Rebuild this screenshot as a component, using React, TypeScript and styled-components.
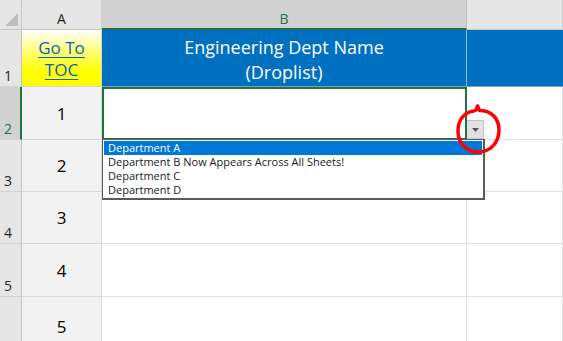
import styled, { createGlobalStyle, css } from "styled-components";

const GlobalStyle = createGlobalStyle`
  html, body {
    margin: 0;
    padding: 0;
    background: #ffffff;
    overflow: hidden;
  }
`;

const green = "#217346";
const grid = "#e1e1e1";
const headBorder = "#c6c6c6";

const departments = [
  "Department A",
  "Department B Now Appears Across All Sheets!",
  "Department C",
  "Department D",
];

const rows = [
  { num: 2, value: "1" },
  { num: 3, value: "2" },
  { num: 4, value: "3" },
  { num: 5, value: "4" },
  { num: 6, value: "5" },
];

export default function App() {
  return (
    <>
      <GlobalStyle />
      <Sheet>
        <Corner>
          <CornerMark />
        </Corner>
        <ColHeader>A</ColHeader>
        <ColHeader selected>B</ColHeader>
        <ColHeader />

        <RowHeader>1</RowHeader>
        <LinkCell>
          <Link>Go To</Link>
          <Link>TOC</Link>
        </LinkCell>
        <TitleCell first>
          Engineering Dept Name
          <br />
          (Droplist)
        </TitleCell>
        <TitleCell />

        {rows.map((r) => (
          <Row key={r.num}>
            <RowHeader selected={r.num === 2}>{r.num}</RowHeader>
            <IndexCell>{r.value}</IndexCell>
            {r.num === 2 ? <ActiveCell /> : <Cell />}
            <Cell />
          </Row>
        ))}

        <DropButton>
          <svg width="7" height="4" viewBox="0 0 7 4">
            <path d="M0 0 L7 0 L3.5 4 Z" fill="#555" />
          </svg>
        </DropButton>

        <DropList>
          {departments.map((d, i) => (
            <DropItem key={d} active={i === 0}>
              {d}
            </DropItem>
          ))}
        </DropList>

        <Annotation width="54" height="56" viewBox="0 0 54 56">
          <path
            d="M23 8 L24.5 4 L26.5 8.5 C37 8.5 46 15 46 28 C46 41 37 50 25 50 C13 50 5 41 5 29 C5 18 11 10 21 9"
            fill="none"
            stroke="#ff0000"
            strokeWidth="3.5"
            strokeLinecap="round"
            strokeLinejoin="round"
          />
        </Annotation>
      </Sheet>
    </>
  );
}

const Sheet = styled.div`
  position: relative;
  display: grid;
  grid-template-columns: 22px 80px 365px 96px;
  grid-template-rows: 30px 57px 53px 52px 52px 53px 60px;
  width: 563px;
  height: 341px;
  overflow: hidden;
  background: #ffffff;
  font-family: "Open Sans", "Liberation Sans", sans-serif;
`;

const Row = styled.div`
  display: contents;
`;

const Corner = styled.div`
  position: relative;
  background: #e6e6e6;
  border-right: 1px solid ${headBorder};
  border-bottom: 1px solid ${headBorder};
  box-sizing: border-box;
`;

const CornerMark = styled.div`
  position: absolute;
  right: 3px;
  bottom: 3px;
  width: 0;
  height: 0;
  border-left: 13px solid transparent;
  border-bottom: 13px solid #bdbdbd;
`;

const ColHeader = styled.div<{ selected?: boolean }>`
  display: flex;
  align-items: center;
  justify-content: center;
  padding-top: 8px;
  box-sizing: border-box;
  font-size: 14px;
  color: #262626;
  background: #e6e6e6;
  border-right: 1px solid #cfcfcf;
  border-bottom: 1px solid ${headBorder};
  ${(p) =>
    p.selected &&
    css`
      background: #d2d2d2;
      color: ${green};
      border-bottom: 2px solid ${green};
      border-right: 1px solid #bcbcbc;
    `}
  &:last-child {
    border-right: none;
  }
`;

const RowHeader = styled.div<{ selected?: boolean }>`
  display: flex;
  align-items: flex-end;
  padding: 0 0 1px 4px;
  box-sizing: border-box;
  font-size: 14px;
  color: #262626;
  background: #e6e6e6;
  border-right: 1px solid #c0c0c0;
  border-bottom: 1px solid #d4d4d4;
  ${(p) =>
    p.selected &&
    css`
      background: #d2d2d2;
      color: ${green};
      border-right: 2px solid ${green};
    `}
`;

const LinkCell = styled.div`
  display: flex;
  flex-direction: column;
  align-items: center;
  justify-content: center;
  padding-top: 2px;
  background: linear-gradient(180deg, #ffffff 0%, #ffff70 40%, #ffff00 75%);
  border-right: 1px solid #d4d4d4;
  border-bottom: 1px solid #d4d4d4;
  box-sizing: border-box;
`;

const Link = styled.span`
  font-size: 17px;
  line-height: 22px;
  color: #0563c1;
  text-decoration: underline;
  text-underline-offset: 3px;
`;

const TitleCell = styled.div<{ first?: boolean }>`
  display: flex;
  align-items: center;
  justify-content: center;
  text-align: center;
  padding-top: 4px;
  box-sizing: border-box;
  background: #0070c0;
  color: #ffffff;
  font-size: 18px;
  line-height: 25px;
  border-bottom: 1px solid #7f9fbf;
  ${(p) =>
    p.first &&
    css`
      border-right: 1px solid #9fb4c8;
    `}
`;

const IndexCell = styled.div`
  display: flex;
  align-items: center;
  justify-content: center;
  font-size: 17px;
  font-weight: 500;
  color: #000000;
  background: #f2f2f2;
  border-right: 1px solid #d9d9d9;
  border-bottom: 1px solid #d9d9d9;
  box-sizing: border-box;
`;

const Cell = styled.div`
  background: #ffffff;
  border-right: 1px solid ${grid};
  border-bottom: 1px solid ${grid};
  box-sizing: border-box;
`;

const ActiveCell = styled.div`
  background: #ffffff;
  box-shadow: inset 0 0 0 2px ${green};
`;

const DropButton = styled.div`
  position: absolute;
  left: 467px;
  top: 120px;
  width: 17px;
  height: 19px;
  display: flex;
  align-items: center;
  justify-content: center;
  box-sizing: border-box;
  background: #e1e1e1;
  border: 1px solid #c4c4c4;
  border-left: none;
`;

const DropList = styled.div`
  position: absolute;
  left: 102px;
  top: 139px;
  width: 383px;
  height: 61px;
  box-sizing: border-box;
  padding: 1px 1px 0;
  background: #ffffff;
  border: 1px solid #5a5a5a;
  border-width: 1px 2px 2px 1px;
`;

const DropItem = styled.div<{ active?: boolean }>`
  height: 14px;
  line-height: 14px;
  padding-left: 4px;
  font-size: 11px;
  color: ${(p) => (p.active ? "#ffffff" : "#1a1a1a")};
  background: ${(p) => (p.active ? "#0078d7" : "transparent")};
  white-space: nowrap;
`;

const Annotation = styled.svg`
  position: absolute;
  left: 453px;
  top: 102px;
  pointer-events: none;
`;
